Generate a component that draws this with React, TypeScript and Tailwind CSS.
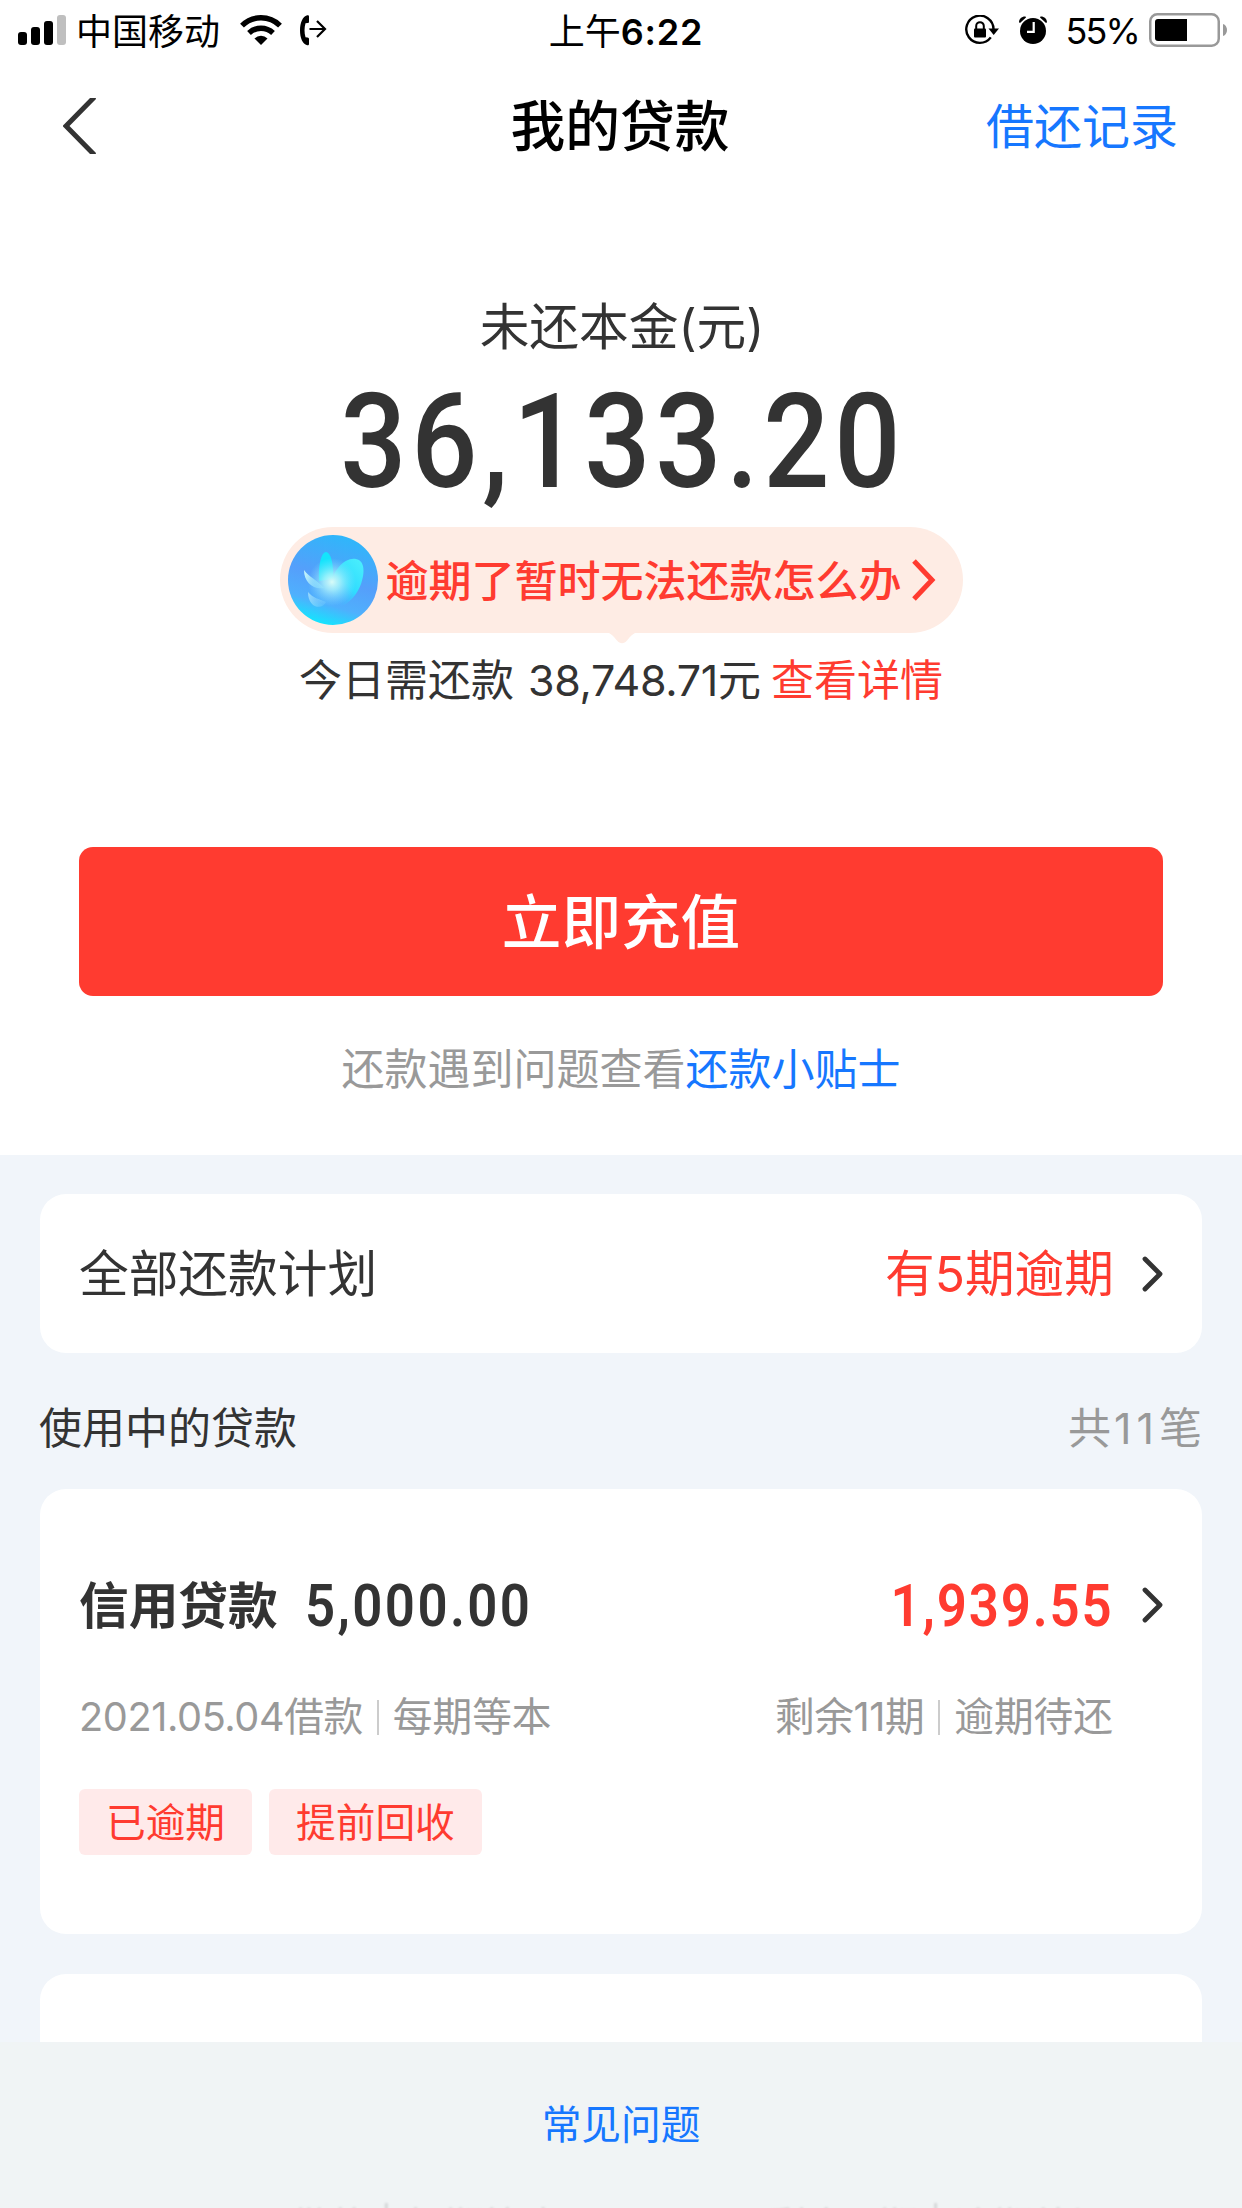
import type { ReactNode } from "react";
import { clsx } from "clsx";

const loans = [
  {
    name: "信用贷款",
    amount: "5,000.00",
    due: "1,939.55",
    date: "2021.05.04借款",
    method: "每期等本",
    remaining: "剩余11期",
    status: "逾期待还",
    tags: ["已逾期", "提前回收"],
  },
];

function SignalIcon() {
  return (
    <svg width="48" height="30" viewBox="0 0 48 30">
      <rect x="0" y="17" width="9" height="13" rx="3" />
      <rect x="13" y="12" width="9" height="18" rx="3" />
      <rect x="26" y="6" width="9" height="24" rx="3" />
      <rect x="39" y="0" width="9" height="30" rx="3" fill="#bfbfbf" />
    </svg>
  );
}

function WifiIcon() {
  return (
    <svg width="42" height="30" viewBox="0 0 42 30" fill="none" stroke="#000" strokeWidth="5.4">
      <path d="M2 10.6a27 27 0 0 1 38 0" />
      <path d="M9 18a17.4 17.4 0 0 1 24 0" />
      <path d="M14.5 23.4a9.4 9.4 0 0 1 13 0L21 30z" fill="#000" stroke="none" />
    </svg>
  );
}

function CallForwardIcon() {
  return (
    <svg width="27" height="31" viewBox="0 0 27 31" fill="none" stroke="#000">
      <path
        d="M7.2.2C2.6 1.6 0 7.6 0 15.200s2.600 13.800 7.200 15c1 .2 1.800-.1 1.800-1.200v-5c0-1-.5-1.500-1.500-1.600l-2-.2c-1.300-4.500-1.300-9.500 0-14l2-.2c1-.1 1.500-.6 1.500-1.600V1.400C9 .3 8.200 0 7.200.2z"
        fill="#000"
        stroke="none"
      />
      <path d="M9.5 14h14.500M17 6l8 8-8 8" strokeWidth="2.2" />
    </svg>
  );
}

function RotationLockIcon() {
  return (
    <svg width="34" height="30" viewBox="0 0 34 30" fill="none" stroke="#000">
      <path d="M25.800 22.400A13.600 13.600 0 1 1 28.500 14" strokeWidth="2.4" />
      <path d="M23.500 13.500h10.500l-5.300 6.500z" fill="#000" stroke="none" />
      <rect x="9" y="13.5" width="12" height="9" rx="1" fill="#000" stroke="none" />
      <path d="M11.200 14v-3a3.800 3.800 0 0 1 7.600 0v3" strokeWidth="2" />
    </svg>
  );
}

function AlarmIcon() {
  return (
    <svg width="28" height="28" viewBox="0 0 28 28">
      <circle cx="14" cy="15" r="13" />
      <path d="M0 6.200C.2 2.600 2.800.3 6.500.5L7 1.500 1 7zM28 6.200C27.800 2.600 25.200.3 21.500.5L21 1.500 27 7z" />
      <path d="M14.700 6v9.800H8" fill="none" stroke="#fff" strokeWidth="2.2" />
    </svg>
  );
}

function BatteryIcon() {
  return (
    <svg width="78" height="34" viewBox="0 0 78 34">
      <rect x="1.25" y="1.25" width="68.5" height="31.5" rx="7" fill="none" stroke="#999" strokeWidth="2.5" />
      <path d="M9 6h29v22H9a3 3 0 0 1-3-3V9a3 3 0 0 1 3-3z" />
      <path d="M74 11c2.500.8 4 3 4 6s-1.500 5.200-4 6z" fill="#999" />
    </svg>
  );
}

function StatusBar() {
  return (
    <div className="flex h-[60px] items-center justify-between pr-[15px] pl-[18px] text-[36px] leading-none text-black">
      <div className="flex w-[500px] items-center">
        <SignalIcon />
        <span className="ml-[10px] pt-[3px]">中国移动</span>
        <span className="ml-[20px]"><WifiIcon /></span>
        <span className="ml-[18px]"><CallForwardIcon /></span>
      </div>
      <div className="flex items-center pt-[3px] pl-[7px]">
        上午<span className="font-semibold tracking-[0.8px]">6:22</span>
      </div>
      <div className="flex w-[500px] items-center justify-end">
        <RotationLockIcon />
        <span className="ml-[20px]"><AlarmIcon /></span>
        <span className="mr-[10px] ml-[19px] pt-[2px] tracking-[-1.9px]">55%</span>
        <BatteryIcon />
      </div>
    </div>
  );
}

function NavBar() {
  return (
    <div className="flex h-[132px] items-center justify-between pr-[64px] pl-[63px]">
      <div className="w-[191px]">
        <svg width="33" height="56" viewBox="0 0 33 56" fill="none" stroke="#333" strokeWidth="5">
          <path d="M31.500 -1L3 28l28.500 29" />
        </svg>
      </div>
      <h1 className="text-[54.7px] leading-none font-medium text-black">我的贷款</h1>
      <a className="pt-[2px] text-[48px] leading-none text-[#1677ff]">借还记录</a>
    </div>
  );
}

function ChevronIcon({ className }: { className?: string }) {
  return (
    <svg
      width="21"
      height="36"
      viewBox="0 0 21 36"
      fill="none"
      stroke="currentColor"
      strokeWidth="4.8"
      strokeLinecap="round"
      strokeLinejoin="round"
      className={className}
    >
      <path d="M3 3l15 15L3 33" />
    </svg>
  );
}

function AssistantIcon() {
  return (
    <svg width="90" height="90" viewBox="0 0 90 90">
      <defs>
        <linearGradient id="ball" x1="0.7" y1="0" x2="0.4" y2="1">
          <stop offset="0" stopColor="#2cb8fa" />
          <stop offset="0.5" stopColor="#559ffb" />
          <stop offset="0.78" stopColor="#4fb0fd" />
          <stop offset="1" stopColor="#12e6fe" />
        </linearGradient>
        <linearGradient id="petal" x1="1" y1="0" x2="0.3" y2="1">
          <stop offset="0" stopColor="#4df0fc" />
          <stop offset="0.6" stopColor="#2fdcff" />
          <stop offset="1" stopColor="#4fb0ff" stopOpacity="0.3" />
        </linearGradient>
        <linearGradient id="leaf" x1="0" y1="0.3" x2="1" y2="0.6">
          <stop offset="0" stopColor="#c4f5fb" />
          <stop offset="1" stopColor="#7fd4fd" stopOpacity="0.5" />
        </linearGradient>
        <radialGradient id="glow">
          <stop offset="0" stopColor="#d8fcf8" />
          <stop offset="0.35" stopColor="#aef3fb" stopOpacity="0.8" />
          <stop offset="1" stopColor="#7fe0ff" stopOpacity="0" />
        </radialGradient>
      </defs>
      <circle cx="45" cy="45" r="45" fill="url(#ball)" />
      <path d="M31 46C30 32 33 17 38 17s8 14 7 27z" fill="#14e4fc" />
      <path d="M44 46c2-11 13-24 24-22 9 1.500 9 14 5 25-4 11-12 20-22 23-6-5-8-17-7-26z" fill="url(#petal)" />
      <path d="M16 35c5 7 12 9 20 18-11 2-20-6-20-18z" fill="url(#leaf)" />
      <path d="M20 57c5 6 11 7 18 10-3 8-18 7-18-10z" fill="url(#leaf)" opacity="0.6" />
      <circle cx="44" cy="47" r="24" fill="url(#glow)" />
    </svg>
  );
}

function Money({ children, className }: { children: ReactNode; className?: string }) {
  return (
    <span className={clsx("inline-block scale-x-[0.88] font-[Roboto,sans-serif]", className)}>
      {children}
    </span>
  );
}

function Summary() {
  return (
    <section className="flex h-[963px] flex-col items-center">
      <div className="mt-[103px] pl-[2px] text-[49.7px] leading-[64px]">未还本金(元)</div>
      <Money className="mt-[13px] pl-[5px] text-[132.5px] leading-[140px] font-medium tracking-[5.4px]">36,133.20</Money>
      <div className="relative mt-[15px] flex h-[106px] w-[683px] items-center rounded-full bg-[#feece4] pl-2 text-[#ff3b30]">
        <AssistantIcon />
        <span className="ml-[8px] pt-[3px] text-[43px] leading-none font-medium">逾期了暂时无法还款怎么办</span>
        <svg width="26" height="42" viewBox="0 0 26 42" fill="none" stroke="currentColor" strokeWidth="5" className="ml-[9px]">
          <path d="M3 2l18 19L3 40" />
        </svg>
        <svg width="32" height="12" viewBox="0 0 32 12" fill="#feece4" className="absolute top-[105px] left-[326px]">
          <path d="M0 0h32c-5 1-8 5-11 8.500-3 3.500-7 3.500-10 0C8 5 5 1 0 0z" />
        </svg>
      </div>
      <div className="mt-[15px] flex text-[43px] leading-[64px]">
        <span>今日需还款</span>
        <span className="ml-[14px] tracking-[-0.3px]">38,748.71</span>
        <span>元</span>
        <a className="ml-[10px] text-[#ff3b30]">查看详情</a>
      </div>
      <button className="mt-[135px] h-[149px] w-[1084px] rounded-[14px] bg-[#ff3b30] pt-[2px] text-[59.6px] leading-none font-medium text-white">
        立即充值
      </button>
      <div className="mt-[41px] text-[43px] leading-[64px] text-[#999]">
        还款遇到问题查看<a className="text-[#1677ff]">还款小贴士</a>
      </div>
    </section>
  );
}

function LoanMeta({ left, right }: { left: string; right: string }) {
  return (
    <div className="flex items-center text-[39.7px] leading-[56px] text-[#999]">
      <span className="tracking-[-0.4px]">{left}</span>
      <span className="mx-[14px] h-[35px] w-[2px] bg-[#ccc]" />
      <span>{right}</span>
    </div>
  );
}

function LoanCard({ loan }: { loan: (typeof loans)[number] }) {
  return (
    <div className="h-[445px] shrink-0 rounded-[26px] bg-white pt-[84px] pr-[39px] pl-[39px]">
      <div className="flex h-[64px] items-center leading-none">
        <span className="pt-[3px] text-[49.7px] font-bold">{loan.name}</span>
        <Money className="ml-[27px] origin-left pt-[2px] text-[60px] font-semibold tracking-[2.7px]">{loan.amount}</Money>
        <Money className="-mr-[6px] ml-auto origin-right pt-[2px] text-[60px] font-semibold tracking-[2.1px] text-[#ff3b30]">
          {loan.due}
        </Money>
        <ChevronIcon className="ml-[34px]" />
      </div>
      <div className="mt-[52px] flex justify-between pr-[50px]">
        <LoanMeta left={loan.date} right={loan.method} />
        <LoanMeta left={loan.remaining} right={loan.status} />
      </div>
      <div className="mt-[44px] flex gap-[17px]">
        {loan.tags.map((tag) => (
          <span key={tag} className="flex h-[66px] items-center rounded-[6px] bg-[#ffeaea] px-[27px] pt-[3px] text-[39.7px] leading-none text-[#ff3b30]">
            {tag}
          </span>
        ))}
      </div>
    </div>
  );
}

export default function App() {
  return (
    <div className="h-[2208px] w-[1242px] overflow-hidden bg-white font-[Inter,'Noto_Sans_CJK_SC',sans-serif] text-[#333]">
      <StatusBar />
      <NavBar />
      <Summary />
      <main className="flex h-[887px] flex-col overflow-hidden bg-[#f1f5fa] px-10 pt-[39px]">
        <div className="flex h-[159px] shrink-0 items-center rounded-[26px] bg-white pr-[39px] pl-[39px] text-[49.7px] leading-none">
          <span className="pt-[3px]">全部还款计划</span>
          <span className="ml-auto pt-[3px] text-[#ff3b30]">有5期逾期</span>
          <ChevronIcon className="ml-[28px]" />
        </div>
        <div className="-ml-px flex h-[136px] shrink-0 items-center justify-between pt-[14px] text-[43px] leading-none">
          <span>使用中的贷款</span>
          <span className="text-[#999]">
            共<span className="pl-[3px] tracking-[5px]">11</span>笔
          </span>
        </div>
        {loans.map((loan) => (
          <LoanCard key={loan.name} loan={loan} />
        ))}
        <div className="mt-[40px] h-[200px] shrink-0 rounded-t-[26px] bg-white" />
      </main>
      <footer className="flex h-[166px] flex-col items-center overflow-hidden bg-[#f0f4f5]">
        <a className="mt-[55px] text-[39.7px] leading-[56px] text-[#1677ff]">常见问题</a>
        {/* next loan's details showing through below the bar */}
        <div className="mt-[52px] flex w-full shrink-0 justify-between pr-[130px] pl-20 text-[39.7px] leading-[44px] whitespace-nowrap text-[#999] opacity-30 blur-[1px]">
          <span>2021.05.04借款 | 每期等本</span>
          <span>剩余11期 | 逾期待还</span>
        </div>
      </footer>
    </div>
  );
}
